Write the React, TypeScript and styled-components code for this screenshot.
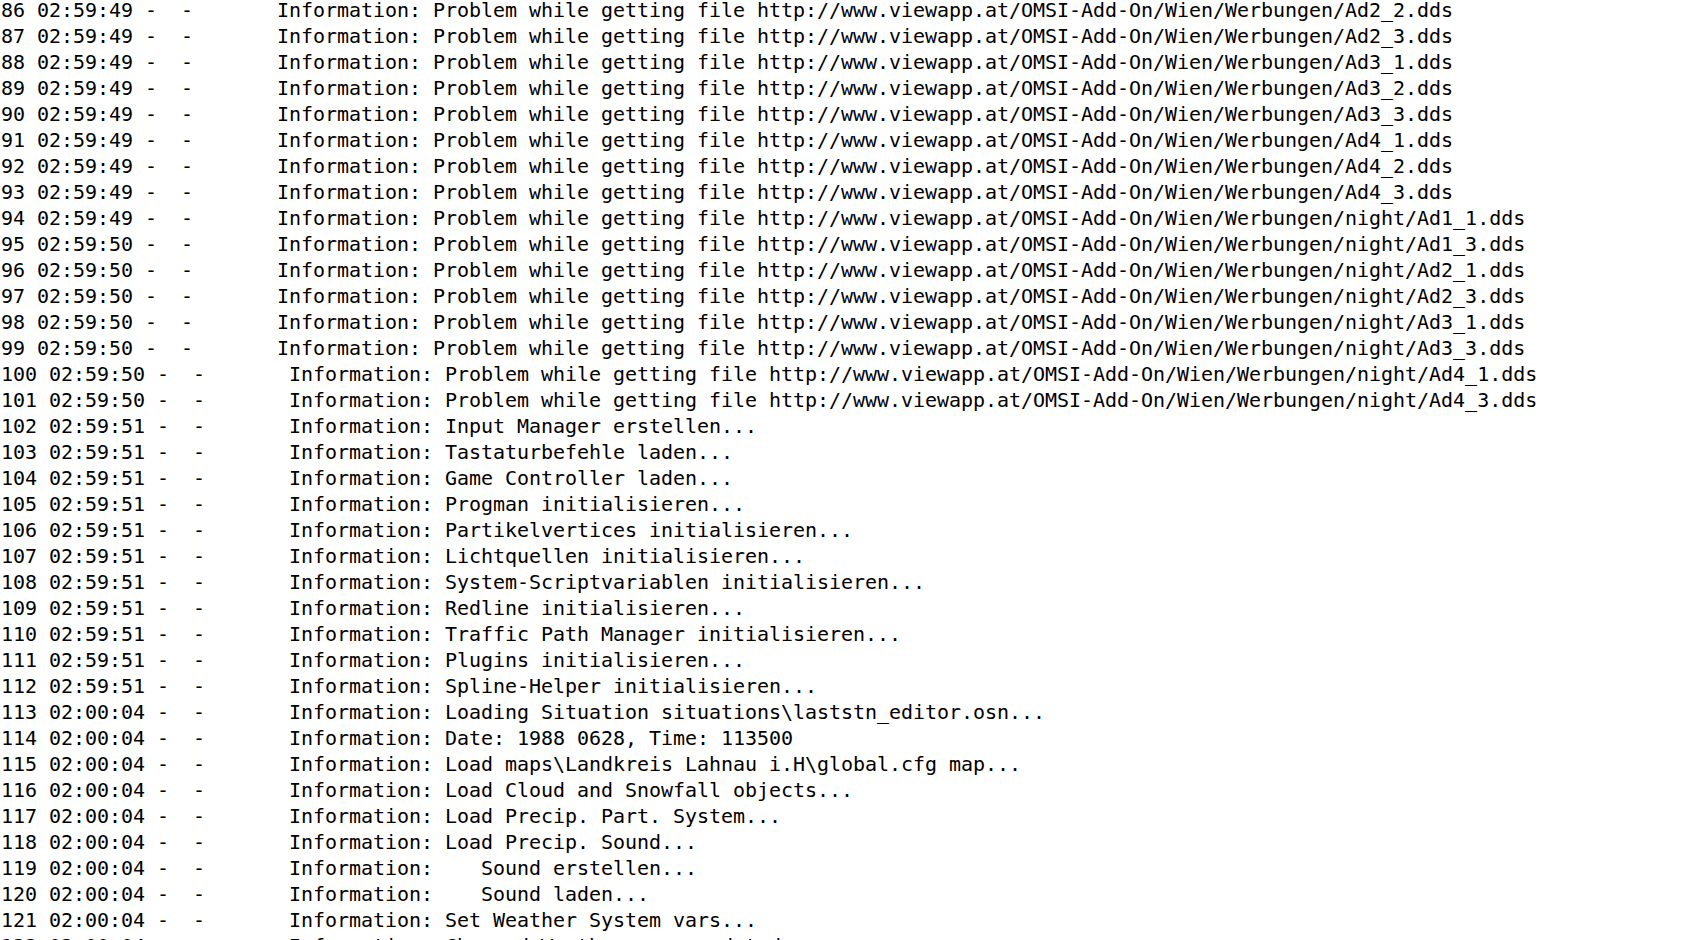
import React from "react";
import styled, { createGlobalStyle } from "styled-components";

const GlobalStyle = createGlobalStyle`
  html, body {
    margin: 0;
    padding: 0;
    background: #ffffff;
    overflow: hidden;
  }
`;

const LogView = styled.div`
  width: 1698px;
  height: 940px;
  overflow: hidden;
  background: #ffffff;
  box-sizing: border-box;
  padding: 0 0 0 1px;
`;

const Lines = styled.div`
  margin-top: -3px;
  display: flex;
  flex-direction: column;
`;

const Line = styled.div`
  font-family: "DejaVu Sans Mono", "Liberation Mono", monospace;
  font-size: 20px;
  letter-spacing: -0.04px;
  line-height: 26px;
  height: 26px;
  color: #000000;
  white-space: pre;
`;

const url = "http://www.viewapp.at/OMSI-Add-On/Wien/Werbungen/";

const entries: [number, string, string][] = [
  [86, "02:59:49", `Problem while getting file ${url}Ad2_2.dds`],
  [87, "02:59:49", `Problem while getting file ${url}Ad2_3.dds`],
  [88, "02:59:49", `Problem while getting file ${url}Ad3_1.dds`],
  [89, "02:59:49", `Problem while getting file ${url}Ad3_2.dds`],
  [90, "02:59:49", `Problem while getting file ${url}Ad3_3.dds`],
  [91, "02:59:49", `Problem while getting file ${url}Ad4_1.dds`],
  [92, "02:59:49", `Problem while getting file ${url}Ad4_2.dds`],
  [93, "02:59:49", `Problem while getting file ${url}Ad4_3.dds`],
  [94, "02:59:49", `Problem while getting file ${url}night/Ad1_1.dds`],
  [95, "02:59:50", `Problem while getting file ${url}night/Ad1_3.dds`],
  [96, "02:59:50", `Problem while getting file ${url}night/Ad2_1.dds`],
  [97, "02:59:50", `Problem while getting file ${url}night/Ad2_3.dds`],
  [98, "02:59:50", `Problem while getting file ${url}night/Ad3_1.dds`],
  [99, "02:59:50", `Problem while getting file ${url}night/Ad3_3.dds`],
  [100, "02:59:50", `Problem while getting file ${url}night/Ad4_1.dds`],
  [101, "02:59:50", `Problem while getting file ${url}night/Ad4_3.dds`],
  [102, "02:59:51", "Input Manager erstellen..."],
  [103, "02:59:51", "Tastaturbefehle laden..."],
  [104, "02:59:51", "Game Controller laden..."],
  [105, "02:59:51", "Progman initialisieren..."],
  [106, "02:59:51", "Partikelvertices initialisieren..."],
  [107, "02:59:51", "Lichtquellen initialisieren..."],
  [108, "02:59:51", "System-Scriptvariablen initialisieren..."],
  [109, "02:59:51", "Redline initialisieren..."],
  [110, "02:59:51", "Traffic Path Manager initialisieren..."],
  [111, "02:59:51", "Plugins initialisieren..."],
  [112, "02:59:51", "Spline-Helper initialisieren..."],
  [113, "02:00:04", "Loading Situation situations\\laststn_editor.osn..."],
  [114, "02:00:04", "Date: 1988 0628, Time: 113500"],
  [115, "02:00:04", "Load maps\\Landkreis Lahnau i.H\\global.cfg map..."],
  [116, "02:00:04", "Load Cloud and Snowfall objects..."],
  [117, "02:00:04", "Load Precip. Part. System..."],
  [118, "02:00:04", "Load Precip. Sound..."],
  [119, "02:00:04", "   Sound erstellen..."],
  [120, "02:00:04", "   Sound laden..."],
  [121, "02:00:04", "Set Weather System vars..."],
  [122, "02:00:04", "Changed Weather vars updated..."],
];

export default function App() {
  return (
    <>
      <GlobalStyle />
      <LogView>
        <Lines>
          {entries.map(([n, t, msg]) => (
            <Line key={n}>{`${n} ${t} -  -       Information: ${msg}`}</Line>
          ))}
        </Lines>
      </LogView>
    </>
  );
}
